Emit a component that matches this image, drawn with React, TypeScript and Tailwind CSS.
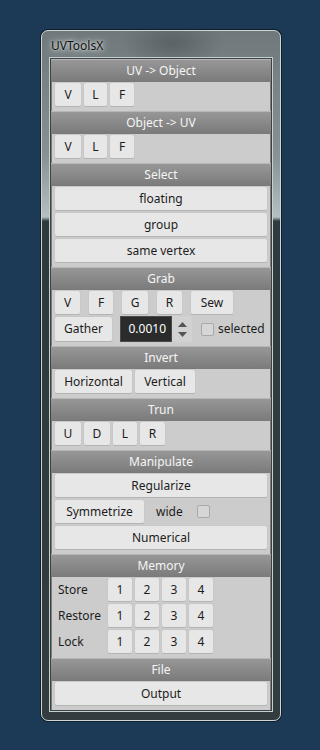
import React from "react";

const font = "[font-family:'Noto_Sans',sans-serif]";

function Btn({ children, className = "" }: { children: React.ReactNode; className?: string }) {
  return (
    <div
      className={`h-[25px] shrink-0 bg-[#e7e7e7] border border-[#c8c8c8] border-b-[#b4b4b4] rounded-[3px] text-[#1c1c1c] text-[12px] leading-none flex items-center justify-center ${className}`}
    >
      {children}
    </div>
  );
}

function Section({ title, children }: { title: string; children: React.ReactNode }) {
  return (
    <div className="border-t border-[#b6b6b6]">
      <div className="h-[22px] bg-[linear-gradient(180deg,#979797,#7a7a7a)] flex items-center justify-center text-[12px] text-[#f5f5f5] leading-none">
        {title}
      </div>
      <div className="bg-[#cccccc] mx-[1px] px-[2px] pb-[4px] flex flex-col gap-[1px]">{children}</div>
    </div>
  );
}

function Check() {
  return <div className="w-[13px] h-[13px] bg-[#d6d6d6] border border-[#a9a9a9] rounded-[2px] shrink-0" />;
}

export default function App() {
  return (
    <div className={`w-[320px] min-h-[750px] bg-[#1c3a55] pt-[30px] pl-[41px] ${font}`}>
      <div className="w-[240px] h-[691px] rounded-[7px] border border-[#ccd4d6] shadow-[0_0_0_1px_#0f1e28] bg-[radial-gradient(ellipse_50px_26px_at_130px_12px,rgba(60,70,74,0.45),transparent),linear-gradient(180deg,#6f797c_0%,#879194_18%,#b4bfc2_27%,#2e3a3d_27.6%,#333d40_100%)] flex flex-col px-[8px]">
        <div className="h-[27px] flex items-center text-[12px] text-[#111] leading-none pt-[2px] pl-[1px]">
          <span className="[text-shadow:0_0_8px_rgba(255,255,255,0.95),0_0_3px_rgba(255,255,255,0.9)]">UVToolsX</span>
        </div>
        <div className="border border-[#3a4244] shadow-[0_0_0_1px_#c8cfd0] bg-[#7c7c7c] flex flex-col">
          <Section title="UV -> Object">
            <div className="flex gap-[1px]">
              <Btn className="w-[28px]">V</Btn>
              <Btn className="w-[25px]">L</Btn>
              <Btn className="w-[26px]">F</Btn>
            </div>
          </Section>
          <Section title="Object -> UV">
            <div className="flex gap-[1px]">
              <Btn className="w-[28px]">V</Btn>
              <Btn className="w-[25px]">L</Btn>
              <Btn className="w-[26px]">F</Btn>
            </div>
          </Section>
          <Section title="Select">
            <Btn>floating</Btn>
            <Btn>group</Btn>
            <Btn>same vertex</Btn>
          </Section>
          <Section title="Grab">
            <div className="flex gap-[7px]">
              <Btn className="w-[27px]">V</Btn>
              <Btn className="w-[26px]">F</Btn>
              <Btn className="w-[28px]">G</Btn>
              <Btn className="w-[27px]">R</Btn>
              <Btn className="w-[44px]">Sew</Btn>
            </div>
            <div className="flex items-center">
              <Btn className="w-[59px] h-[26px]">Gather</Btn>
              <div className="ml-[7px] w-[52px] h-[26px] bg-[#2b2b2b] border border-[#4a4a4a] text-white text-[12px] leading-none flex items-center justify-end pr-[5px]">
                0.0010
              </div>
              <div className="w-[20px] h-[26px] bg-[#d2d2d2] flex flex-col items-center justify-center gap-[5px]">
                <svg width="9" height="5" viewBox="0 0 9 5">
                  <path d="M0 5 L4.5 0 L9 5 Z" fill="#555" />
                </svg>
                <svg width="9" height="5" viewBox="0 0 9 5">
                  <path d="M0 0 L4.5 5 L9 0 Z" fill="#555" />
                </svg>
              </div>
              <div className="ml-[9px]">
                <Check />
              </div>
              <span className="ml-[4px] text-[12px] text-[#1c1c1c] leading-none">selected</span>
            </div>
          </Section>
          <Section title="Invert">
            <div className="flex gap-[1px]">
              <Btn className="w-[79px]">Horizontal</Btn>
              <Btn className="w-[62px]">Vertical</Btn>
            </div>
          </Section>
          <Section title="Trun">
            <div className="flex gap-[1px]">
              <Btn className="w-[28px]">U</Btn>
              <Btn className="w-[28px]">D</Btn>
              <Btn className="w-[26px]">L</Btn>
              <Btn className="w-[27px]">R</Btn>
            </div>
          </Section>
          <Section title="Manipulate">
            <Btn>Regularize</Btn>
            <div className="flex items-center">
              <Btn className="w-[91px]">Symmetrize</Btn>
              <span className="ml-[11px] text-[12px] text-[#1c1c1c] leading-none">wide</span>
              <div className="ml-[14px]">
                <Check />
              </div>
            </div>
            <Btn>Numerical</Btn>
          </Section>
          <Section title="Memory">
            {["Store", "Restore", "Lock"].map((l) => (
              <div key={l} className="flex items-center">
                <span className="w-[53px] pl-[4px] text-[12px] text-[#1c1c1c] leading-none">{l}</span>
                <div className="flex gap-[1px]">
                  <Btn className="w-[26px]">1</Btn>
                  <Btn className="w-[26px]">2</Btn>
                  <Btn className="w-[26px]">3</Btn>
                  <Btn className="w-[26px]">4</Btn>
                </div>
              </div>
            ))}
          </Section>
          <Section title="File">
            <Btn>Output</Btn>
          </Section>
        </div>
      </div>
    </div>
  );
}
